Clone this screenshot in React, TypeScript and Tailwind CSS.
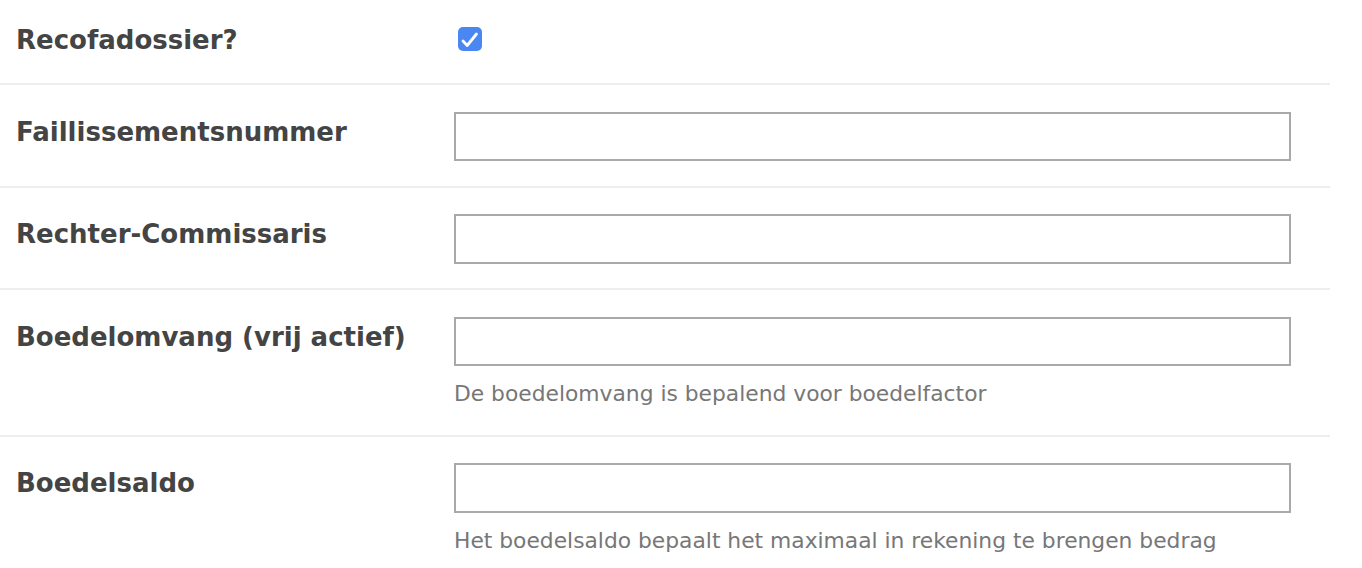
const LABEL = 'font-["DejaVu_Sans",Verdana,sans-serif] font-bold text-[26px] text-[#444444] leading-normal'
const HELP = 'font-["DejaVu_Sans",Verdana,sans-serif] text-[21.8px] text-[#777777]'

function Row({ label, help }: { label: string; help?: string }) {
  return (
    <div className="flex border-b-2 border-[#eeeeee] pt-[26.5px] pb-[24.5px]">
      <div className="w-[454px] shrink-0 pl-[16px]">
        <div className={`${LABEL} mt-[1px]`}>{label}</div>
      </div>
      <div className="flex-1 pr-[39px]">
        <input
          type="text"
          className="block h-[49.5px] w-full border-2 border-[#a9a9a9] bg-white outline-none"
        />
        {help && <div className={`${HELP} mt-[12px] leading-[32px]`}>{help}</div>}
      </div>
    </div>
  )
}

export default function App() {
  return (
    <div className="min-h-screen bg-white">
      <div className="w-[1330px]">
        <div className="flex h-[85px] border-b-2 border-[#eeeeee]">
          <div className="w-[454px] shrink-0 pl-[16px]">
            <div className={`${LABEL} mt-[21px]`}>Recofadossier?</div>
          </div>
          <div className="pt-[27px]">
            <div className="ml-[4px] h-[24px] w-[24px] rounded-[5px] bg-[#4b87f2]">
              <svg width="24" height="24" viewBox="0 0 24 24" fill="none">
                <path d="M5 14 L9.2 18.5 L18.5 7" stroke="white" strokeWidth="2.8" strokeLinecap="round" strokeLinejoin="round" />
              </svg>
            </div>
          </div>
        </div>
        <Row label="Faillissementsnummer" />
        <Row label="Rechter-Commissaris" />
        <Row label="Boedelomvang (vrij actief)" help="De boedelomvang is bepalend voor boedelfactor" />
        <Row label="Boedelsaldo" help="Het boedelsaldo bepaalt het maximaal in rekening te brengen bedrag" />
      </div>
    </div>
  )
}
